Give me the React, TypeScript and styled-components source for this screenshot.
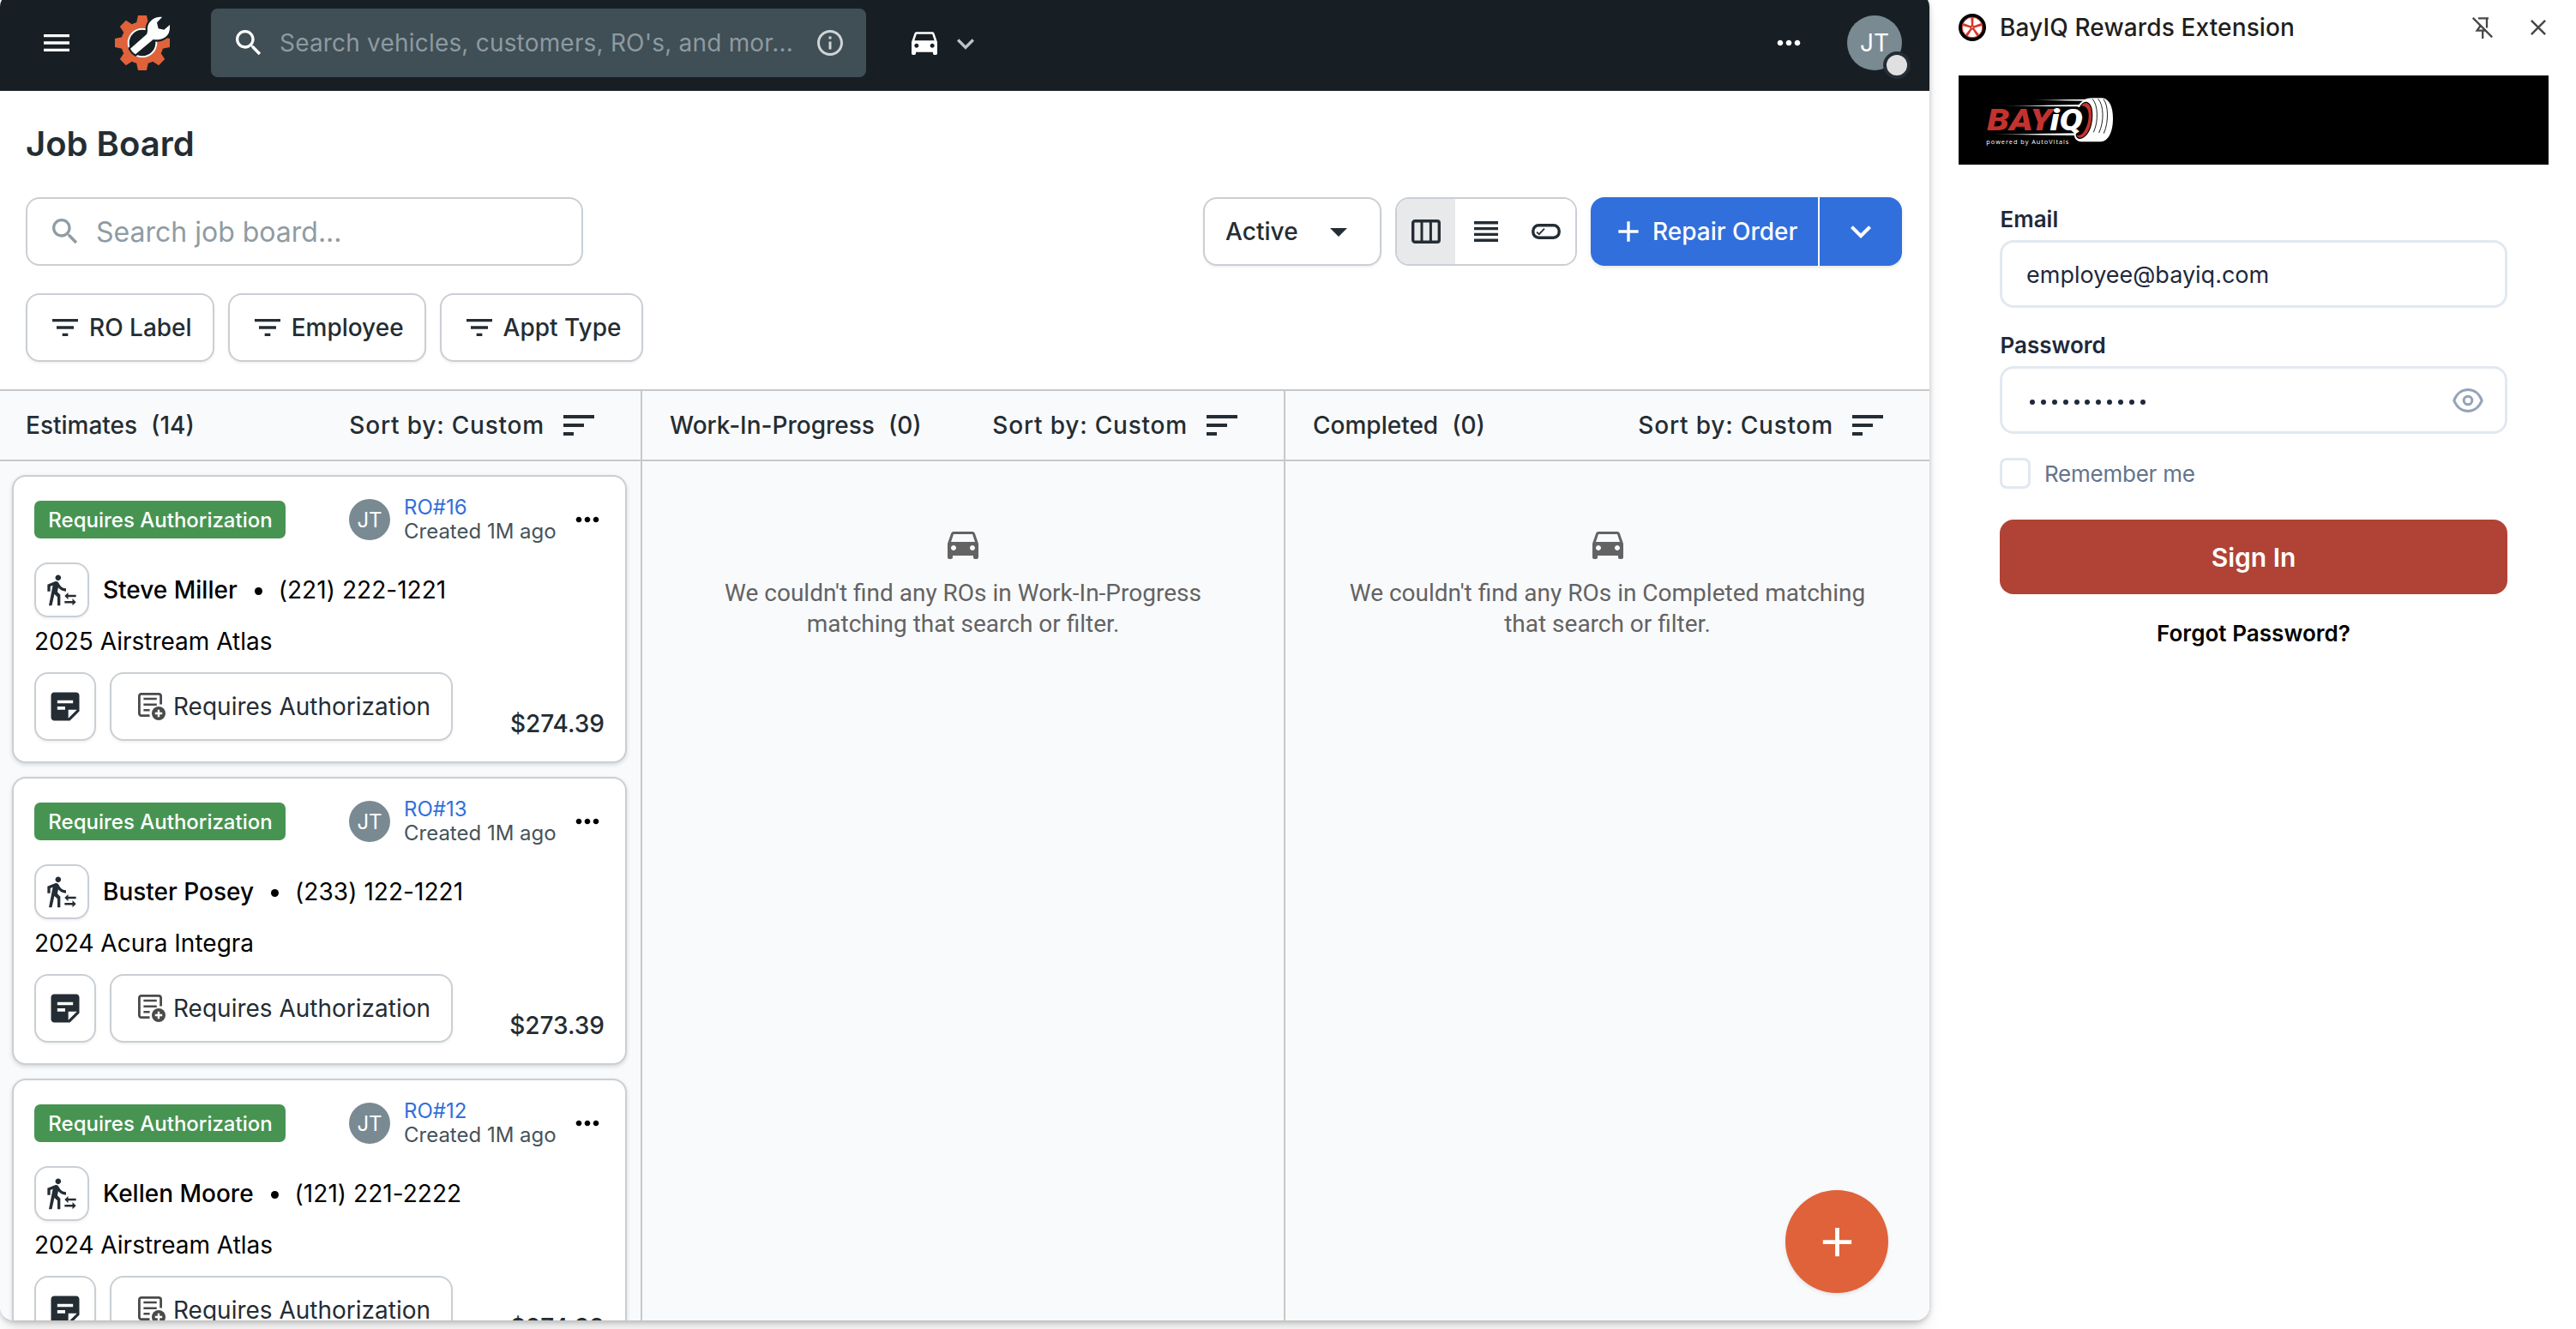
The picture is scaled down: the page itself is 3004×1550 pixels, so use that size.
import React from "react";
import styled, { createGlobalStyle, css } from "styled-components";

const color = {
  navy: "#171f25",
  ink: "#242d33",
  border: "#c9cfd4",
  line: "#c8c8c8",
  board: "#f9fafc",
  blue: "#306fdc",
  green: "#479452",
  orange: "#e0623a",
  slate: "#7a8a92",
  brick: "#b04335",
};

const GlobalStyle = createGlobalStyle`
  * { box-sizing: border-box; }
  body { margin: 0; background: #fff; font-family: Inter, "Liberation Sans", sans-serif; }
  svg { display: block; flex: none; }
`;

/* ---------- shell ---------- */
const Page = styled.div`
  display: flex;
  width: 3004px;
  height: 1550px;
  overflow: hidden;
  background: #fff;
`;
const Window = styled.main`
  position: relative;
  z-index: 1;
  display: flex;
  flex-direction: column;
  width: 2250px;
  height: 1548px;
  margin-top: -8px;
  border-radius: 16px;
  background: #fff;
  box-shadow: 0 2px 6px rgba(0, 0, 0, 0.22), 0 14px 20px -6px rgba(0, 0, 0, 0.14);
`;
const Clip = styled.div`
  display: flex;
  flex-direction: column;
  flex: 1;
  min-height: 0;
  border-radius: 16px;
  overflow: hidden;
`;

/* ---------- top bar ---------- */
const TopBar = styled.header`
  display: flex;
  align-items: center;
  flex: none;
  height: 114px;
  padding: 8px 32px 6px 46px;
  background: ${color.navy};
  color: #fff;
`;
const Brand = styled.div`
  margin: 0 48px;
`;
const GlobalSearch = styled.div`
  display: flex;
  align-items: center;
  width: 764px;
  height: 80px;
  padding: 0 24px;
  border-radius: 8px;
  background: #404e55;
`;
const GlobalSearchText = styled.span`
  flex: 1;
  margin-left: 16px;
  font-size: 28px;
  letter-spacing: 0.19px;
  white-space: nowrap;
  color: #8c9aa1;
`;
const VehicleMenu = styled.div`
  display: flex;
  align-items: center;
  gap: 8px;
  margin-left: 48px;
  padding-bottom: 3px;
`;
const ChevronSlot = styled.span`
  padding-top: 4px;
  color: #bcc4c9;
`;
const TopRight = styled.div`
  display: flex;
  align-items: center;
  gap: 48px;
  margin-left: auto;
`;
const Avatar = styled.div<{ $size: number; $font: number }>`
  position: relative;
  display: flex;
  align-items: center;
  justify-content: center;
  flex: none;
  width: ${(p) => p.$size}px;
  height: ${(p) => p.$size}px;
  border-radius: 50%;
  background: ${color.slate};
  color: #fff;
  font-size: ${(p) => p.$font}px;
`;
const Presence = styled.span`
  position: absolute;
  right: -10px;
  bottom: -10px;
  width: 32px;
  height: 32px;
  border: 4px solid #242d33;
  border-radius: 50%;
  background: #e0e0e0;
`;

/* ---------- toolbar ---------- */
const Tools = styled.section`
  display: flex;
  flex-direction: column;
  flex: none;
  padding: 38px 32px 32px 30px;
`;
const Title = styled.h1`
  margin: 0 0 38px;
  font-size: 40px;
  font-weight: 600;
  line-height: 48px;
  color: ${color.ink};
`;
const ToolRow = styled.div`
  display: flex;
  gap: 16px;
`;
const outlined = css`
  border: 2px solid ${color.border};
  border-radius: 16px;
  background: #fff;
  color: ${color.ink};
`;
const BoardSearch = styled.div`
  ${outlined}
  display: flex;
  align-items: center;
  gap: 16px;
  width: 650px;
  height: 80px;
  margin-right: auto;
  padding: 0 24px;
  font-size: 32px;
  color: #8f9ca3;
`;
const ActiveSelect = styled.button`
  ${outlined}
  display: flex;
  align-items: center;
  justify-content: space-between;
  width: 208px;
  height: 80px;
  padding: 0 24px;
  font: 500 28px Inter, sans-serif;
  letter-spacing: 0.05px;
  box-shadow: 0 2px 3px rgba(0, 0, 0, 0.06);
`;
const ViewToggle = styled.div`
  ${outlined}
  display: grid;
  grid-template-columns: 68px 70px 70px;
  width: 212px;
  height: 80px;
  overflow: hidden;
`;
const ViewOption = styled.div<{ $on?: boolean }>`
  display: flex;
  align-items: center;
  justify-content: center;
  padding-left: ${(p) => (p.$on ? 0 : 2)}px;
  background: ${(p) => (p.$on ? "#e8e9eb" : "#fff")};
`;
const SplitButton = styled.div`
  display: flex;
  gap: 2px;
  width: 363px;
  height: 80px;
  border-radius: 16px;
  overflow: hidden;
  background: #fff;
  box-shadow: 0 2px 4px rgba(0, 0, 0, 0.1);
`;
const SplitMain = styled.button`
  display: flex;
  align-items: center;
  gap: 8px;
  width: 265px;
  padding: 0 0 0 24px;
  border: 0;
  background: ${color.blue};
  color: #fff;
  font: 500 28px Inter, sans-serif;
`;
const SplitMore = styled.button`
  display: flex;
  align-items: center;
  justify-content: center;
  flex: 1;
  padding: 0;
  border: 0;
  background: ${color.blue};
  color: #fff;
`;
const FilterRow = styled(ToolRow)`
  margin-top: 32px;
`;
const FilterButton = styled.button`
  ${outlined}
  display: flex;
  align-items: center;
  gap: 8px;
  height: 80px;
  padding: 0 24px;
  font: 500 28px Inter, sans-serif;
  box-shadow: 0 2px 3px rgba(0, 0, 0, 0.06);
`;

/* ---------- board ---------- */
const Board = styled.section`
  display: grid;
  grid-template-columns: 749px 750px 751px;
  flex: 1;
  min-height: 0;
  border-top: 2px solid ${color.line};
  background: ${color.board};
`;
const Column = styled.div`
  display: flex;
  flex-direction: column;
  min-height: 0;
  overflow: hidden;
  & + & > header { padding-left: 32px; }
  &:not(:last-child) { border-right: 2px solid ${color.line}; }
`;
const ColumnHead = styled.header`
  display: flex;
  align-items: center;
  flex: none;
  height: 82px;
  padding: 0 48px 0 30px;
  border-bottom: 2px solid ${color.line};
  color: ${color.ink};
  font-size: 28px;
  font-weight: 500;
`;
const Count = styled.span`
  margin-left: 16px;
`;
const SortBy = styled.span`
  margin-left: auto;
  margin-right: 16px;
  letter-spacing: 0.8px;
`;
const CardList = styled.div`
  display: flex;
  flex-direction: column;
  gap: 16px;
  padding: 16px 16px 0 14px;
`;
const Card = styled.article`
  display: flex;
  flex-direction: column;
  flex: none;
  height: 336px;
  padding: 20px 24px 24px;
  border: 2px solid ${color.border};
  border-radius: 16px;
  background: #fff;
  box-shadow: 0 2px 5px rgba(0, 0, 0, 0.14);
`;
const CardTop = styled.div`
  display: flex;
  align-items: center;
  height: 60px;
`;
const Badge = styled.span`
  display: flex;
  align-items: center;
  justify-content: center;
  width: 293px;
  height: 44px;
  margin-right: auto;
  padding-left: 1px;
  border-radius: 7px;
  background: ${color.green};
  color: #fff;
  font-size: 24px;
  font-weight: 500;
`;
const OrderMeta = styled.div`
  display: flex;
  flex-direction: column;
  width: 178px;
  margin: 0 16px 0 16px;
  font-size: 24px;
  line-height: 28px;
  white-space: nowrap;
  color: #46535a;
`;
const OrderLink = styled.a`
  color: ${color.blue};
`;
const Customer = styled.div`
  display: flex;
  align-items: center;
  height: 64px;
  margin-top: 20px;
  font-size: 28px;
  color: #000;
`;
const IconBox = styled.span<{ $w: number; $h: number }>`
  ${outlined}
  display: flex;
  align-items: center;
  justify-content: center;
  width: ${(p) => p.$w}px;
  height: ${(p) => p.$h}px;
  box-shadow: 0 2px 3px rgba(0, 0, 0, 0.06);
`;
const Name = styled.span`
  margin-left: 16px;
  font-weight: 500;
`;
const Dot = styled.span`
  width: 9px;
  height: 9px;
  margin: 3px 19px 0 20px;
  border-radius: 50%;
  background: #000;
`;
const Phone = styled.span`
  letter-spacing: 0.05px;
`;
const Vehicle = styled.div`
  margin-top: 8px;
  font-size: 28px;
  line-height: 40px;
  color: #000;
`;
const CardActions = styled.div`
  display: flex;
  gap: 16px;
  height: 80px;
  margin-top: 16px;
`;
const AuthButton = styled.button`
  ${outlined}
  display: flex;
  align-items: center;
  gap: 9px;
  width: 400px;
  padding: 0 0 0 31px;
  font: 400 28px Inter, sans-serif;
  box-shadow: 0 2px 3px rgba(0, 0, 0, 0.06);
`;
const Price = styled.span`
  align-self: flex-end;
  margin-left: auto;
  font-size: 28px;
  font-weight: 500;
  line-height: 40px;
  color: ${color.ink};
`;
const Empty = styled.div`
  display: flex;
  flex-direction: column;
  align-items: center;
  padding-top: 72px;
  color: #636363;
  font: 400 28px/36px Roboto, sans-serif;
  text-align: center;
`;
const EmptyText = styled.p`
  margin: 16px 0 0;
`;
const Fab = styled.button`
  position: absolute;
  right: 48px;
  bottom: 32px;
  display: flex;
  align-items: center;
  justify-content: center;
  width: 120px;
  height: 120px;
  padding: 0;
  border: 0;
  border-radius: 50%;
  background: ${color.orange};
  color: #fff;
  box-shadow: 0 2px 4px rgba(0, 0, 0, 0.1);
`;

/* ---------- side panel ---------- */
const Panel = styled.aside`
  display: flex;
  flex-direction: column;
  flex: 1;
  padding: 0 32px 0 34px;
`;
const PanelHead = styled.div`
  display: flex;
  align-items: center;
  height: 64px;
  padding-right: 3px;
  color: #474747;
`;
const PanelTitle = styled.span`
  margin: 0 auto 0 16px;
  font-size: 28px;
  font-weight: 500;
  letter-spacing: 0.13px;
  color: #1f1f1f;
`;
const PinSlot = styled.span`
  margin-right: 44px;
`;
const Banner = styled.div`
  height: 104px;
  margin-top: 24px;
  padding: 23.67px 0 0 31px;
  background: #000;
`;
const Form = styled.form`
  display: flex;
  flex-direction: column;
  padding: 48px 48px 0;
`;
const Label = styled.label`
  height: 40px;
  font-size: 26px;
  font-weight: 600;
  line-height: 32px;
  color: #1e293b;
  text-indent: 0.5px;
`;
const Field = styled.div`
  display: flex;
  align-items: center;
  justify-content: space-between;
  height: 79px;
  margin-bottom: 28px;
  padding: 1px 25px 0 28px;
  border: 3px solid #e2e8f0;
  border-radius: 16px;
  font-size: 27px;
  color: #1e293b;
`;
const Mask = styled.span`
  display: flex;
  gap: 6.9px;
  padding: 4px 0 0 4px;
`;
const MaskDot = styled.i`
  width: 6px;
  height: 6px;
  border-radius: 50%;
  background: #1e293b;
`;
const Remember = styled.div`
  display: flex;
  align-items: center;
  gap: 16px;
  height: 36px;
  font-size: 26px;
  letter-spacing: -0.25px;
  color: #64748b;
`;
const Box = styled.span`
  width: 36px;
  height: 36px;
  border: 3px solid #e2e8f0;
  border-radius: 8px;
`;
const SignIn = styled.button`
  height: 87px;
  margin-top: 36px;
  border: 0;
  border-radius: 16px;
  background: ${color.brick};
  color: #fff;
  font: 600 30px Inter, sans-serif;
`;
const Forgot = styled.a`
  margin-top: 30px;
  font-size: 26px;
  font-weight: 600;
  line-height: 32px;
  letter-spacing: 0.05px;
  text-align: center;
  color: #000;
`;

/* ---------- icons ---------- */
const Glyph = ({ d, size = 40 }: { d: string; size?: number }) => (
  <svg width={size} height={size} viewBox="0 0 24 24" fill="currentColor">
    <path d={d} />
  </svg>
);
const ICON = {
  menu: "M3 18h18v-2H3v2zm0-5h18v-2H3v2zm0-7v2h18V6H3z",
  search:
    "M15.5 14h-.79l-.28-.27C15.41 12.59 16 11.11 16 9.5 16 5.91 13.09 3 9.5 3S3 5.91 3 9.5 5.91 16 9.5 16c1.61 0 3.09-.59 4.23-1.57l.27.28v.79l5 4.99L20.49 19l-4.99-5zm-6 0C7.01 14 5 11.99 5 9.5S7.01 5 9.5 5 14 7.01 14 9.5 11.99 14 9.5 14z",
  info: "M11 7h2v2h-2zm0 4h2v6h-2zm1-9C6.48 2 2 6.48 2 12s4.48 10 10 10 10-4.48 10-10S17.52 2 12 2zm0 18c-4.41 0-8-3.59-8-8s3.59-8 8-8 8 3.59 8 8-3.59 8-8 8z",
  car: "M18.92 6.01C18.72 5.42 18.16 5 17.5 5h-11c-.66 0-1.21.42-1.42 1.01L3 12v8c0 .55.45 1 1 1h1c.55 0 1-.45 1-1v-1h12v1c0 .55.45 1 1 1h1c.55 0 1-.45 1-1v-8l-2.08-5.99zM6.5 16c-.83 0-1.5-.67-1.5-1.5S5.67 13 6.5 13s1.5.67 1.5 1.5S7.33 16 6.5 16zm11 0c-.83 0-1.5-.67-1.5-1.5s.67-1.5 1.5-1.5 1.5.67 1.5 1.5-.67 1.5-1.5 1.5zM5 11l1.5-4.5h11L19 11H5z",
  chevron: "M16.59 8.59L12 13.17 7.41 8.59 6 10l6 6 6-6z",
  dots: "M6 10c-1.1 0-2 .9-2 2s.9 2 2 2 2-.9 2-2-.9-2-2-2zm12 0c-1.1 0-2 .9-2 2s.9 2 2 2 2-.9 2-2-.9-2-2-2zm-6 0c-1.1 0-2 .9-2 2s.9 2 2 2 2-.9 2-2-.9-2-2-2z",
  caret: "M7 10l5 5 5-5z",
  add: "M19 13h-6v6h-2v-6H5v-2h6V5h2v6h6v2z",
  filter: "M10 18h4v-2h-4v2zM3 6v2h18V6H3zm3 7h12v-2H6v2z",
  sort: "M3 18h6v-2H3v2zM3 6v2h18V6H3zm0 7h12v-2H3v2z",
  walk: "M16.49 15.5v-1.75L14 16.25l2.49 2.5V17H22v-1.5zm3.02 4.25H14v1.5h5.51V23L22 20.5 19.51 18zM9.5 5.5c1.1 0 2-.9 2-2s-.9-2-2-2-2 .9-2 2 .9 2 2 2zM5.75 8.9L3 23h2.1l1.75-8L9 17v6h2v-7.55L8.95 13.4l.6-3C10.85 12 12.8 13 15 13v-2c-1.85 0-3.45-1-4.35-2.45l-.95-1.6C9.35 6.35 8.7 6 8 6c-.25 0-.5.05-.75.15L2 8.3V13h2V9.65l1.75-.75",
  note: "M19 3H4.99C3.89 3 3 3.9 3 5l.01 14c0 1.1.89 2 1.99 2h10l6-6V5c0-1.1-.9-2-2-2zM7 8h10v2H7V8zm5 6H7v-2h5v2zm2 5.5V14h5.5L14 19.5z",
};

const GearLogo = () => (
  <svg width="64" height="64" viewBox="0 0 192 192">
    {[0, 2, 3, 4, 5, 6, 7].map((k) => (
      <polygon key={k} points="81,0 111,0 118,32 74,32" fill={color.orange} transform={`rotate(${k * 45} 96 96)`} />
    ))}
    <circle cx="96" cy="96" r="63" fill="none" stroke={color.orange} strokeWidth="23" />
    <circle cx="96" cy="96" r="49" fill="none" stroke="#fff" strokeWidth="6" />
    <path
      d="M165 6C140 2 112 22 114 50C114 58 113 62 111 66L54 116C58 124 64 131 72 136L134 84C150 87 176 84 188 62C192 52 193 42 192 33L172 50L152 46L147 25Z"
      fill="#fff"
      stroke={color.navy}
      strokeWidth="14"
      strokeLinejoin="round"
      paintOrder="stroke"
    />
  </svg>
);
const ColumnsIcon = () => (
  <svg width="34" height="28" viewBox="0 0 34 28" fill="none" stroke="currentColor" strokeWidth="3.4">
    <rect x="1.7" y="1.7" width="30.6" height="24.6" rx="2.4" />
    <path d="M12 2V26M22.4 2V26" strokeWidth="3" />
  </svg>
);
const RowsIcon = () => (
  <svg width="28" height="24" viewBox="0 0 28 24" fill="none" stroke="currentColor" strokeWidth="3.4">
    <path d="M0 1.7H28M0 8.6H28M0 15.4H28M0 22.3H28" />
  </svg>
);
const PillIcon = () => (
  <svg width="34" height="18" viewBox="0 0 34 18" fill="none" stroke="currentColor">
    <rect x="1.8" y="1.8" width="30.4" height="14.4" rx="6.6" strokeWidth="3.4" />
    <path d="M6 9.6L8.8 12.2L15 5.6" strokeWidth="1.7" />
  </svg>
);
const AuthIcon = () => (
  <svg width="32" height="32" viewBox="0 0 32 32" fill="none" stroke="#4a4a4a" strokeWidth="2.8">
    <path d="M13.5 26.6H4C2.4 26.6 1.4 25.6 1.4 24V4C1.4 2.4 2.4 1.4 4 1.4H24C25.6 1.4 26.6 2.4 26.6 4V13.6" />
    <path d="M6.4 7H21.8M6.4 13.7H21.8M6.4 20.2H13.6" strokeWidth="2.5" />
    <circle cx="24" cy="24" r="8" fill="#4a4a4a" stroke="none" />
    <path d="M24 19.8V28.2M19.8 24H28.2" stroke="#fff" strokeWidth="2.4" />
  </svg>
);
const WheelIcon = () => (
  <svg width="32" height="32" viewBox="0 0 32 32">
    <circle cx="16" cy="16" r="16" fill="#000" />
    <circle cx="16" cy="16" r="11.8" fill="#fff" stroke="#d9382c" strokeWidth="1" />
    {[0, 72, 144, 216, 288].map((a) => (
      <path key={a} d="M14.4 4.6H17.6L17 16H15Z" fill="#d9382c" transform={`rotate(${a} 16 16)`} />
    ))}
    <circle cx="16" cy="16" r="2.8" fill="#d9382c" />
    <circle cx="16" cy="16" r="1" fill="#f3a59e" />
  </svg>
);
const PinOffIcon = () => (
  <svg width="24" height="25" viewBox="0 0 24 25" fill="none" stroke="currentColor" strokeWidth="2.3">
    <path d="M0.8 0.8L23.2 23.4M7 1.4H19M17 1.4V12.4M9 8.6V10.8L5.6 15.6H14.6M12.2 15.6V25" />
  </svg>
);
const CloseIcon = () => (
  <svg width="18" height="18" viewBox="0 0 18 18" fill="none" stroke="currentColor" strokeWidth="2.5">
    <path d="M0.9 0.9L17.1 17.1M17.1 0.9L0.9 17.1" />
  </svg>
);
const EyeIcon = () => (
  <svg width="36" height="28" viewBox="0 0 36 28" fill="none" stroke="#94a3b8" strokeWidth="3">
    <path d="M1.8 14C4.6 6.4 10.6 1.6 18 1.6S31.4 6.4 34.2 14C31.4 21.6 25.4 26.4 18 26.4S4.6 21.6 1.8 14Z" />
    <circle cx="18" cy="14" r="4.8" />
  </svg>
);
const BayIqLogo = () => (
  <svg width="150" height="60" viewBox="105 335 450 180">
    <defs>
      <linearGradient id="streak" x1="0" x2="1">
        <stop offset="0" stopColor="#fff" stopOpacity="0" />
        <stop offset="0.6" stopColor="#fff" />
      </linearGradient>
    </defs>
    <path d="M255 349.5L470 346V352Z" fill="url(#streak)" />
    <path d="M150 370L440 365V372Z" fill="url(#streak)" />
    <path d="M112 469L430 465V473Z" fill="url(#streak)" />
    <path
      d="M430 369C442 352 458 342 478 342H516C540 346 552 374 552 414C552 460 536 495 508 495H440C426 493 419 485 416 472Z"
      fill="#fff"
    />
    <path d="M436 372C444 358 454 354 462 356C478 361 484 386 480 420C476 456 458 484 436 485C428 484 424 480 422 472Z" fill="#000" />
    <path
      d="M440 370C448 360 455 358 461 360C475 365 480 388 477 418C473 452 456 480 437 481C430 480 426 477 424 471C432 475 441 472 450 460C462 443 468 420 467 398C466 380 456 366 440 370Z"
      fill="#c4322f"
    />
    <path d="M110 374H446C462 382 464 430 444 462H110Z" fill="#000" />
    <g fill="none" stroke="#000" strokeWidth="2.6">
      <path d="M480 345C500 366 502 424 484 462" />
      <path d="M500 345C520 366 522 424 503 464" />
      <path d="M519 346C536 368 538 424 520 466" />
    </g>
    <g fontFamily="Roboto, sans-serif" fontWeight="900" fontStyle="italic" fontSize="104">
      <text x="112" y="456" fill="#c4322f" textLength="226" lengthAdjust="spacingAndGlyphs">
        BAY
      </text>
      <text x="332" y="456" fill="#fff" textLength="114" lengthAdjust="spacingAndGlyphs">
        iQ
      </text>
    </g>
    <text x="109" y="503" fill="#fff" fontFamily="Open Sans, sans-serif" fontSize="22" textLength="288">
      powered by AutoVitals
    </text>
  </svg>
);

/* ---------- data ---------- */
const orders = [
  { ro: 16, name: "Steve Miller", phone: "(221) 222-1221", vehicle: "2025 Airstream Atlas", total: "$274.39" },
  { ro: 13, name: "Buster Posey", phone: "(233) 122-1221", vehicle: "2024 Acura Integra", total: "$273.39" },
  { ro: 12, name: "Kellen Moore", phone: "(121) 221-2222", vehicle: "2024 Airstream Atlas", total: "$274.39" },
];

const Head = ({ title, count }: { title: string; count: number }) => (
  <ColumnHead>
    {title}
    <Count>({count})</Count>
    <SortBy>Sort by: Custom</SortBy>
    <Glyph d={ICON.sort} size={48} />
  </ColumnHead>
);

const OrderCard = ({ order }: { order: (typeof orders)[number] }) => (
  <Card>
    <CardTop>
      <Badge>Requires Authorization</Badge>
      <Avatar $size={48} $font={24}>JT</Avatar>
      <OrderMeta>
        <OrderLink>RO#{order.ro}</OrderLink>
        <span>Created 1M ago</span>
      </OrderMeta>
      <Glyph d={ICON.dots} />
    </CardTop>
    <Customer>
      <IconBox $w={64} $h={64}>
        <Glyph d={ICON.walk} />
      </IconBox>
      <Name>{order.name}</Name>
      <Dot />
      <Phone>{order.phone}</Phone>
    </Customer>
    <Vehicle>{order.vehicle}</Vehicle>
    <CardActions>
      <IconBox $w={72} $h={80}>
        <Glyph d={ICON.note} size={44} />
      </IconBox>
      <AuthButton>
        <AuthIcon />
        Requires Authorization
      </AuthButton>
      <Price>{order.total}</Price>
    </CardActions>
  </Card>
);

export default function App() {
  return (
    <Page>
      <GlobalStyle />
      <Window>
        <Clip>
          <TopBar>
            <Glyph d={ICON.menu} />
            <Brand>
              <GearLogo />
            </Brand>
            <GlobalSearch>
              <Glyph d={ICON.search} />
              <GlobalSearchText>Search vehicles, customers, RO's, and mor...</GlobalSearchText>
              <svg width="36" height="36" viewBox="0 0 24 24" fill="#cfd4d7">
                <path d={ICON.info} />
              </svg>
            </GlobalSearch>
            <VehicleMenu>
              <Glyph d={ICON.car} />
              <ChevronSlot>
                <Glyph d={ICON.chevron} />
              </ChevronSlot>
            </VehicleMenu>
            <TopRight>
              <Glyph d={ICON.dots} />
              <Avatar $size={64} $font={28}>
                JT
                <Presence />
              </Avatar>
            </TopRight>
          </TopBar>
          <Tools>
            <Title>Job Board</Title>
            <ToolRow>
              <BoardSearch>
                <Glyph d={ICON.search} />
                Search job board...
              </BoardSearch>
              <ActiveSelect>
                Active
                <Glyph d={ICON.caret} size={48} />
              </ActiveSelect>
              <ViewToggle>
                <ViewOption $on>
                  <ColumnsIcon />
                </ViewOption>
                <ViewOption>
                  <RowsIcon />
                </ViewOption>
                <ViewOption>
                  <PillIcon />
                </ViewOption>
              </ViewToggle>
              <SplitButton>
                <SplitMain>
                  <Glyph d={ICON.add} />
                  Repair Order
                </SplitMain>
                <SplitMore>
                  <Glyph d={ICON.chevron} size={48} />
                </SplitMore>
              </SplitButton>
            </ToolRow>
            <FilterRow>
              {["RO Label", "Employee", "Appt Type"].map((f) => (
                <FilterButton key={f}>
                  <Glyph d={ICON.filter} />
                  {f}
                </FilterButton>
              ))}
            </FilterRow>
          </Tools>
          <Board>
            <Column>
              <Head title="Estimates" count={14} />
              <CardList>
                {orders.map((o) => (
                  <OrderCard key={o.ro} order={o} />
                ))}
              </CardList>
            </Column>
            <Column>
              <Head title="Work-In-Progress" count={0} />
              <Empty>
                <Glyph d={ICON.car} size={48} />
                <EmptyText>
                  We couldn't find any ROs in Work-In-Progress
                  <br />
                  matching that search or filter.
                </EmptyText>
              </Empty>
            </Column>
            <Column>
              <Head title="Completed" count={0} />
              <Empty>
                <Glyph d={ICON.car} size={48} />
                <EmptyText>
                  We couldn't find any ROs in Completed matching
                  <br />
                  that search or filter.
                </EmptyText>
              </Empty>
            </Column>
          </Board>
        </Clip>
        <Fab>
          <Glyph d={ICON.add} size={57} />
        </Fab>
      </Window>
      <Panel>
        <PanelHead>
          <WheelIcon />
          <PanelTitle>BayIQ Rewards Extension</PanelTitle>
          <PinSlot>
            <PinOffIcon />
          </PinSlot>
          <CloseIcon />
        </PanelHead>
        <Banner>
          <BayIqLogo />
        </Banner>
        <Form>
          <Label>Email</Label>
          <Field>employee@bayiq.com</Field>
          <Label>Password</Label>
          <Field>
            <Mask>
              {Array.from({ length: 11 }, (_, i) => (
                <MaskDot key={i} />
              ))}
            </Mask>
            <EyeIcon />
          </Field>
          <Remember>
            <Box />
            Remember me
          </Remember>
          <SignIn type="button">Sign In</SignIn>
          <Forgot>Forgot Password?</Forgot>
        </Form>
      </Panel>
    </Page>
  );
}
